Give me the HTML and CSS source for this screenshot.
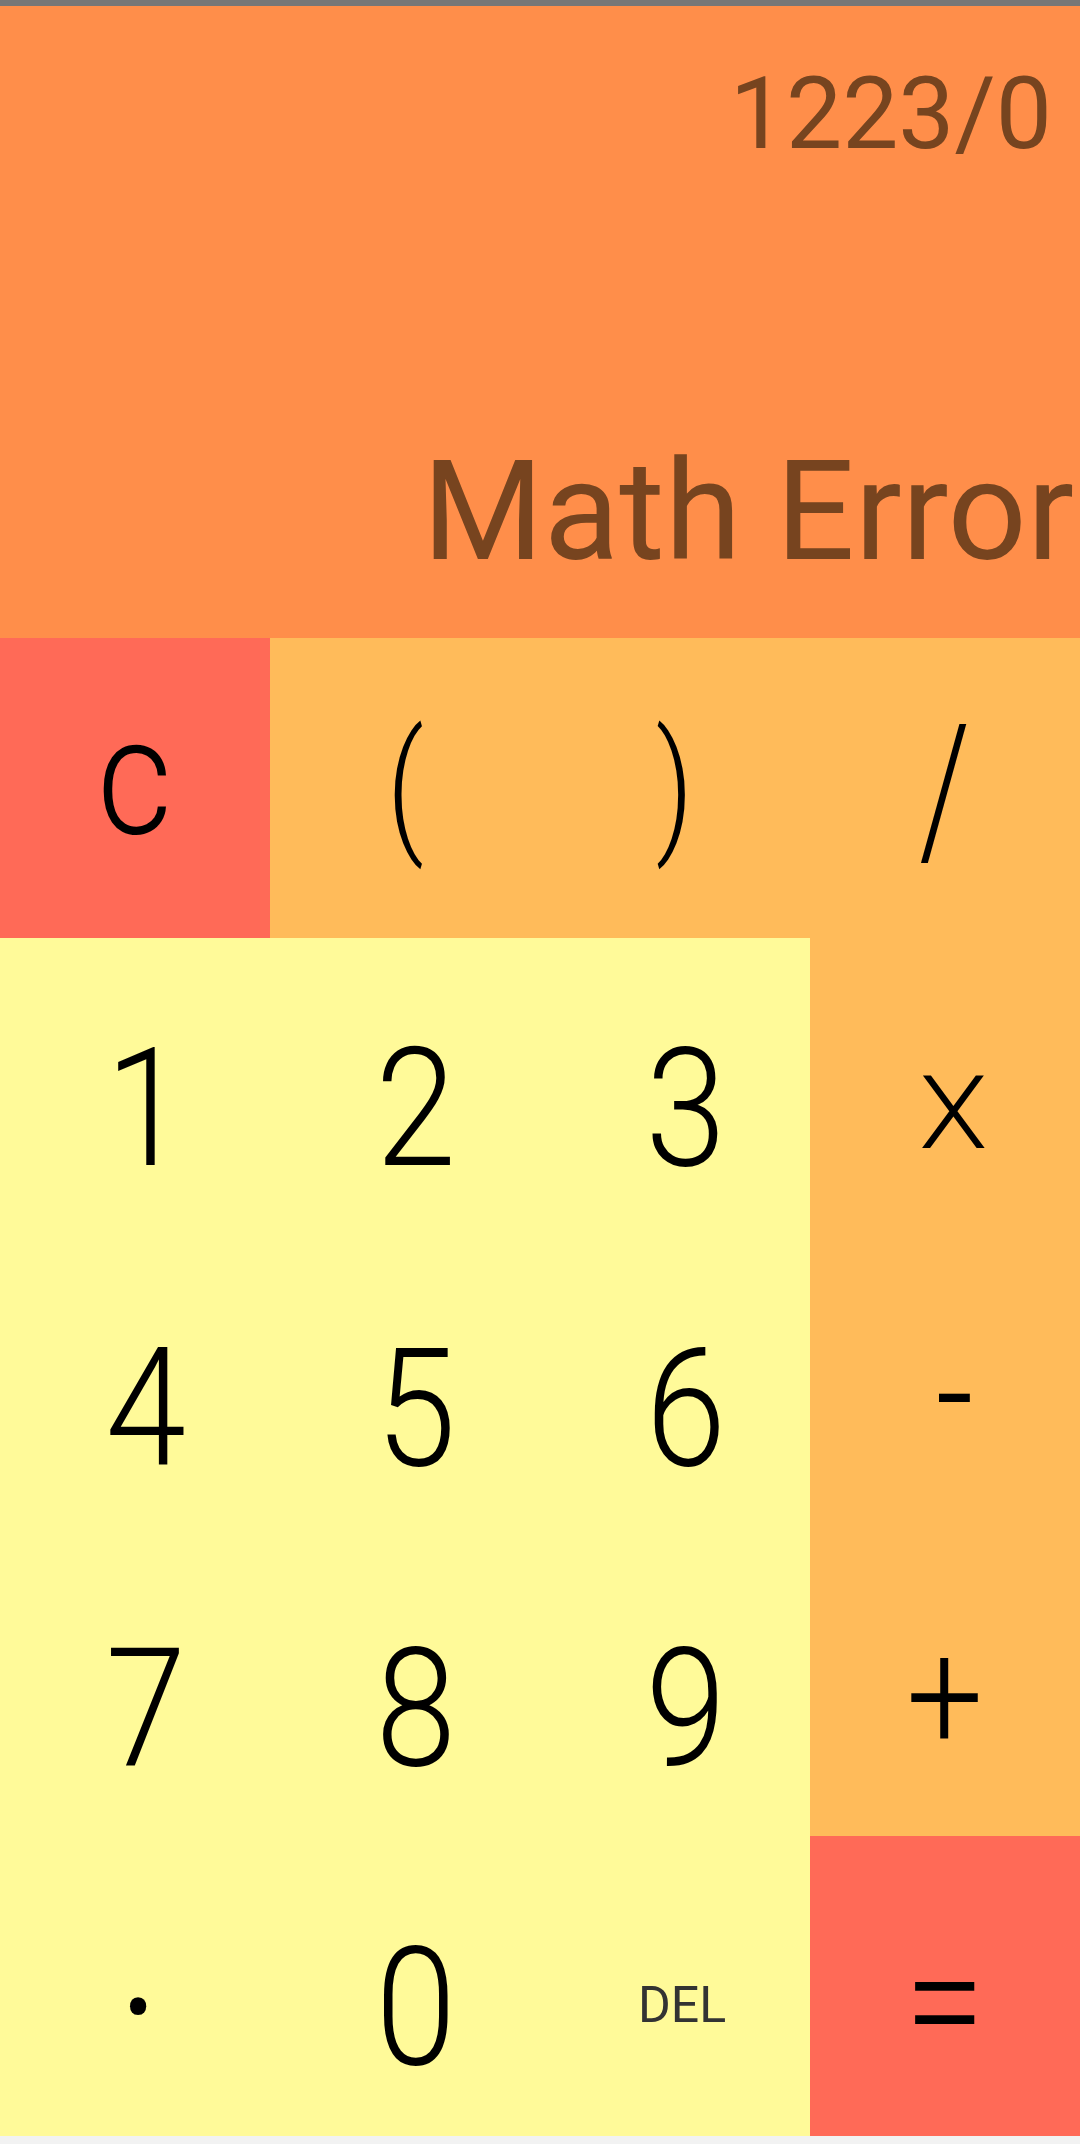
FILE: index.html
```html
<!DOCTYPE html>
<html>
<head>
<meta charset="utf-8">
<link rel="stylesheet" href="styles.css">
</head>
<body>
<div class="app">
  <div class="statusline"></div>
  <div class="display">
    <div class="expr">1223/0</div>
    <div class="result">Math Error</div>
  </div>
  <div class="keypad">
    <div class="key red top"><span class="lbl">c</span></div>
    <div class="key op paren"><span class="lbl paren-lbl">(</span></div>
    <div class="key op paren"><span class="lbl paren-lbl">)</span></div>
    <div class="key op slash"><span class="lbl slash-lbl">/</span></div>

    <div class="key num digit"><span class="lbl">1</span></div>
    <div class="key num digit"><span class="lbl">2</span></div>
    <div class="key num digit"><span class="lbl">3</span></div>
    <div class="key op times"><span class="lbl small">X</span></div>

    <div class="key num digit"><span class="lbl">4</span></div>
    <div class="key num digit"><span class="lbl">5</span></div>
    <div class="key num digit"><span class="lbl">6</span></div>
    <div class="key op minus"><span class="lbl minus-lbl">-</span></div>

    <div class="key num digit"><span class="lbl">7</span></div>
    <div class="key num digit"><span class="lbl">8</span></div>
    <div class="key num digit"><span class="lbl">9</span></div>
    <div class="key op plus"><span class="lbl plus-lbl">+</span></div>

    <div class="key num dot"><span class="lbl">·</span></div>
    <div class="key num digit"><span class="lbl">0</span></div>
    <div class="key num del"><span class="lbl del-lbl">DEL</span></div>
    <div class="key red equals"><span class="lbl">=</span></div>
  </div>
  <div class="navstrip"></div>
</div>
</body>
</html>
```

FILE: styles.css
```css
html, body {
  margin: 0;
  padding: 0;
  background: #f2f2f2;
}

.app {
  width: 1080px;
  height: 2144px;
  display: flex;
  flex-direction: column;
  font-family: Roboto, "Liberation Sans", sans-serif;
  overflow: hidden;
}

.statusline {
  height: 6px;
  background: #777777;
  flex: none;
}

.display {
  height: 632px;
  flex: none;
  background: #ff8e4a;
  color: #77441f;
  display: flex;
  flex-direction: column;
  justify-content: space-between;
  align-items: flex-end;
  padding-top: 58px;
  padding-bottom: 57px;
  box-sizing: border-box;
}

.expr {
  font-size: 100px;
  line-height: 100px;
  padding-right: 28px;
  font-weight: 400;
}

.result {
  font-size: 139px;
  line-height: 139px;
  padding-right: 6px;
  font-weight: 400;
}

.keypad {
  height: 1498px;
  flex: none;
  display: grid;
  grid-template-columns: repeat(4, 270px);
  grid-template-rows: repeat(5, 1fr);
}

.navstrip {
  flex: 1;
  background: #f2f2f2;
}

.key {
  display: flex;
  align-items: center;
  justify-content: center;
  box-sizing: border-box;
  color: #000;
}

.red { background: #ff6a57; }
.op { background: #ffbb5a; }
.num { background: #fffa99; }

.lbl {
  display: inline-block;
  font-size: 165px;
  line-height: 165px;
  font-weight: 300;
  transform: scaleX(0.88);
}

.top { padding-bottom: 23px; }
.paren { padding-bottom: 3px; }
.slash { padding-top: 7px; }
.digit { padding-top: 43px; padding-left: 22px; }
.times { padding-top: 52px; padding-left: 16px; }
.minus { padding-top: 14px; padding-left: 20px; }
.plus { padding-top: 21px; }
.equals { padding-top: 31px; }
.dot { padding-top: 44px; padding-left: 8px; }
.del { padding-top: 38px; padding-left: 14px; }

.paren-lbl {
  font-size: 145px;
  line-height: 145px;
  transform: scaleX(0.8);
}

.slash-lbl {
  font-size: 180px;
  line-height: 180px;
  transform: scaleX(0.72);
  font-weight: 300;
}

.minus-lbl {
  transform: scaleX(0.8);
}

.plus-lbl {
  font-size: 155px;
  line-height: 155px;
}

.small {
  font-size: 102px;
  line-height: 102px;
  transform: scaleX(1.1);
}

.dot .lbl { font-weight: 400; }

.del-lbl {
  font-size: 50px;
  line-height: 50px;
  font-weight: 400;
  color: #333;
  transform: none;
}
```
